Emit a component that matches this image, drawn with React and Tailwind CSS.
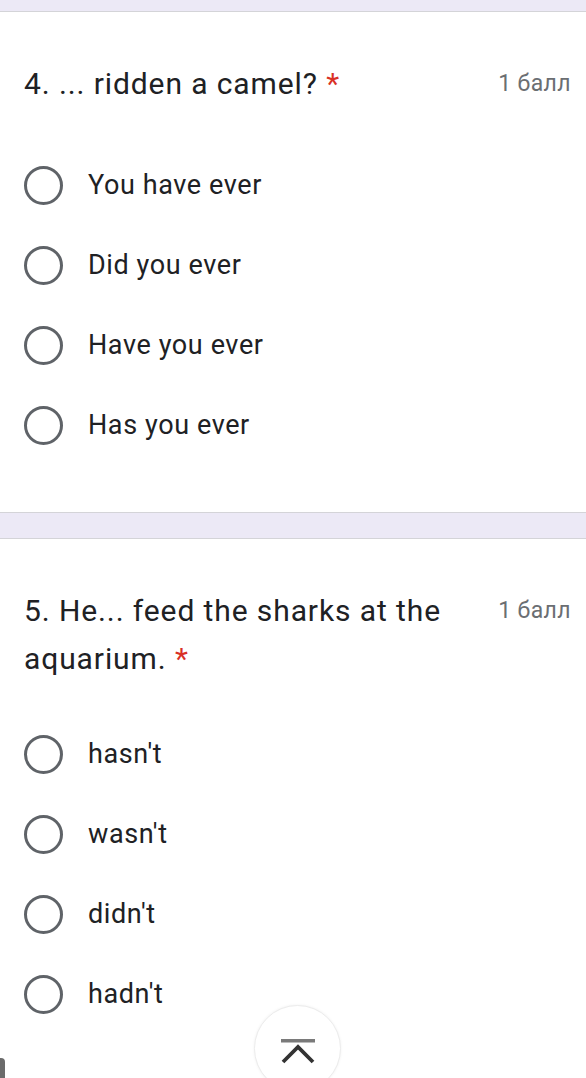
import React from "react";

const font = { fontFamily: "Roboto, 'Noto Sans', Arial, sans-serif" };

function Radio({ label }) {
  return (
    <div className="flex items-center h-[80px]">
      <div className="w-[39px] h-[39px] rounded-full border-[3px] border-[#5f6368] shrink-0" />
      <span className="ml-[25px] text-[27px] leading-none tracking-[0.6px] text-[#202124]">{label}</span>
    </div>
  );
}

function Score() {
  return (
    <div className="text-[23px] leading-[48px] tracking-[0.4px] text-[#6b6e72] shrink-0">1 балл</div>
  );
}

export default function App() {
  return (
    <div className="relative w-[586px] h-[1078px] overflow-hidden bg-white" style={font}>
      <div className="h-[12px] bg-[#ece9f6] border-b border-[#d4d4d8]" />
      <div className="bg-white pl-6 pr-[15px] pt-[48px] pb-[47px] border-b border-[#d4d4d8]">
        <div className="flex items-start justify-between">
          <div className="text-[30px] leading-[48px] tracking-[0.9px] text-[#202124]">
            4. ... ridden a camel? <span className="text-[#d93025]">*</span>
          </div>
          <Score />
        </div>
        <div className="mt-[37px]">
          {["You have ever", "Did you ever", "Have you ever", "Has you ever"].map((o) => (
            <Radio key={o} label={o} />
          ))}
        </div>
      </div>
      <div className="h-[26px] bg-[#ece9f6] border-b border-[#d4d4d8]" />
      <div className="bg-white pl-6 pr-[15px] pt-[48px]">
        <div className="flex items-start justify-between">
          <div className="text-[30px] leading-[48px] tracking-[0.9px] text-[#202124] w-[455px]">
            5. He... feed the sharks at the aquarium. <span className="text-[#d93025]">*</span>
          </div>
          <Score />
        </div>
        <div className="mt-[31px]">
          {["hasn't", "wasn't", "didn't", "hadn't"].map((o) => (
            <Radio key={o} label={o} />
          ))}
        </div>
      </div>
      <button className="absolute left-[254px] top-[1005px] w-[87px] h-[87px] rounded-full bg-white border border-[#ececec] shadow-[0_0_3px_rgba(0,0,0,0.06)] flex justify-center">
        <svg width="36" height="30" viewBox="0 0 36 30" className="mt-[33px]">
          <rect x="1" y="0" width="34" height="3.5" fill="#7a7a7a" />
          <path d="M3 23 L18 8 L33 23" fill="none" stroke="#333" strokeWidth="3.8" />
        </svg>
      </button>
      <div className="absolute left-0 top-[1058px] w-[5px] h-[20px] bg-[#6b6b6b] rounded-tr-sm" />
    </div>
  );
}
